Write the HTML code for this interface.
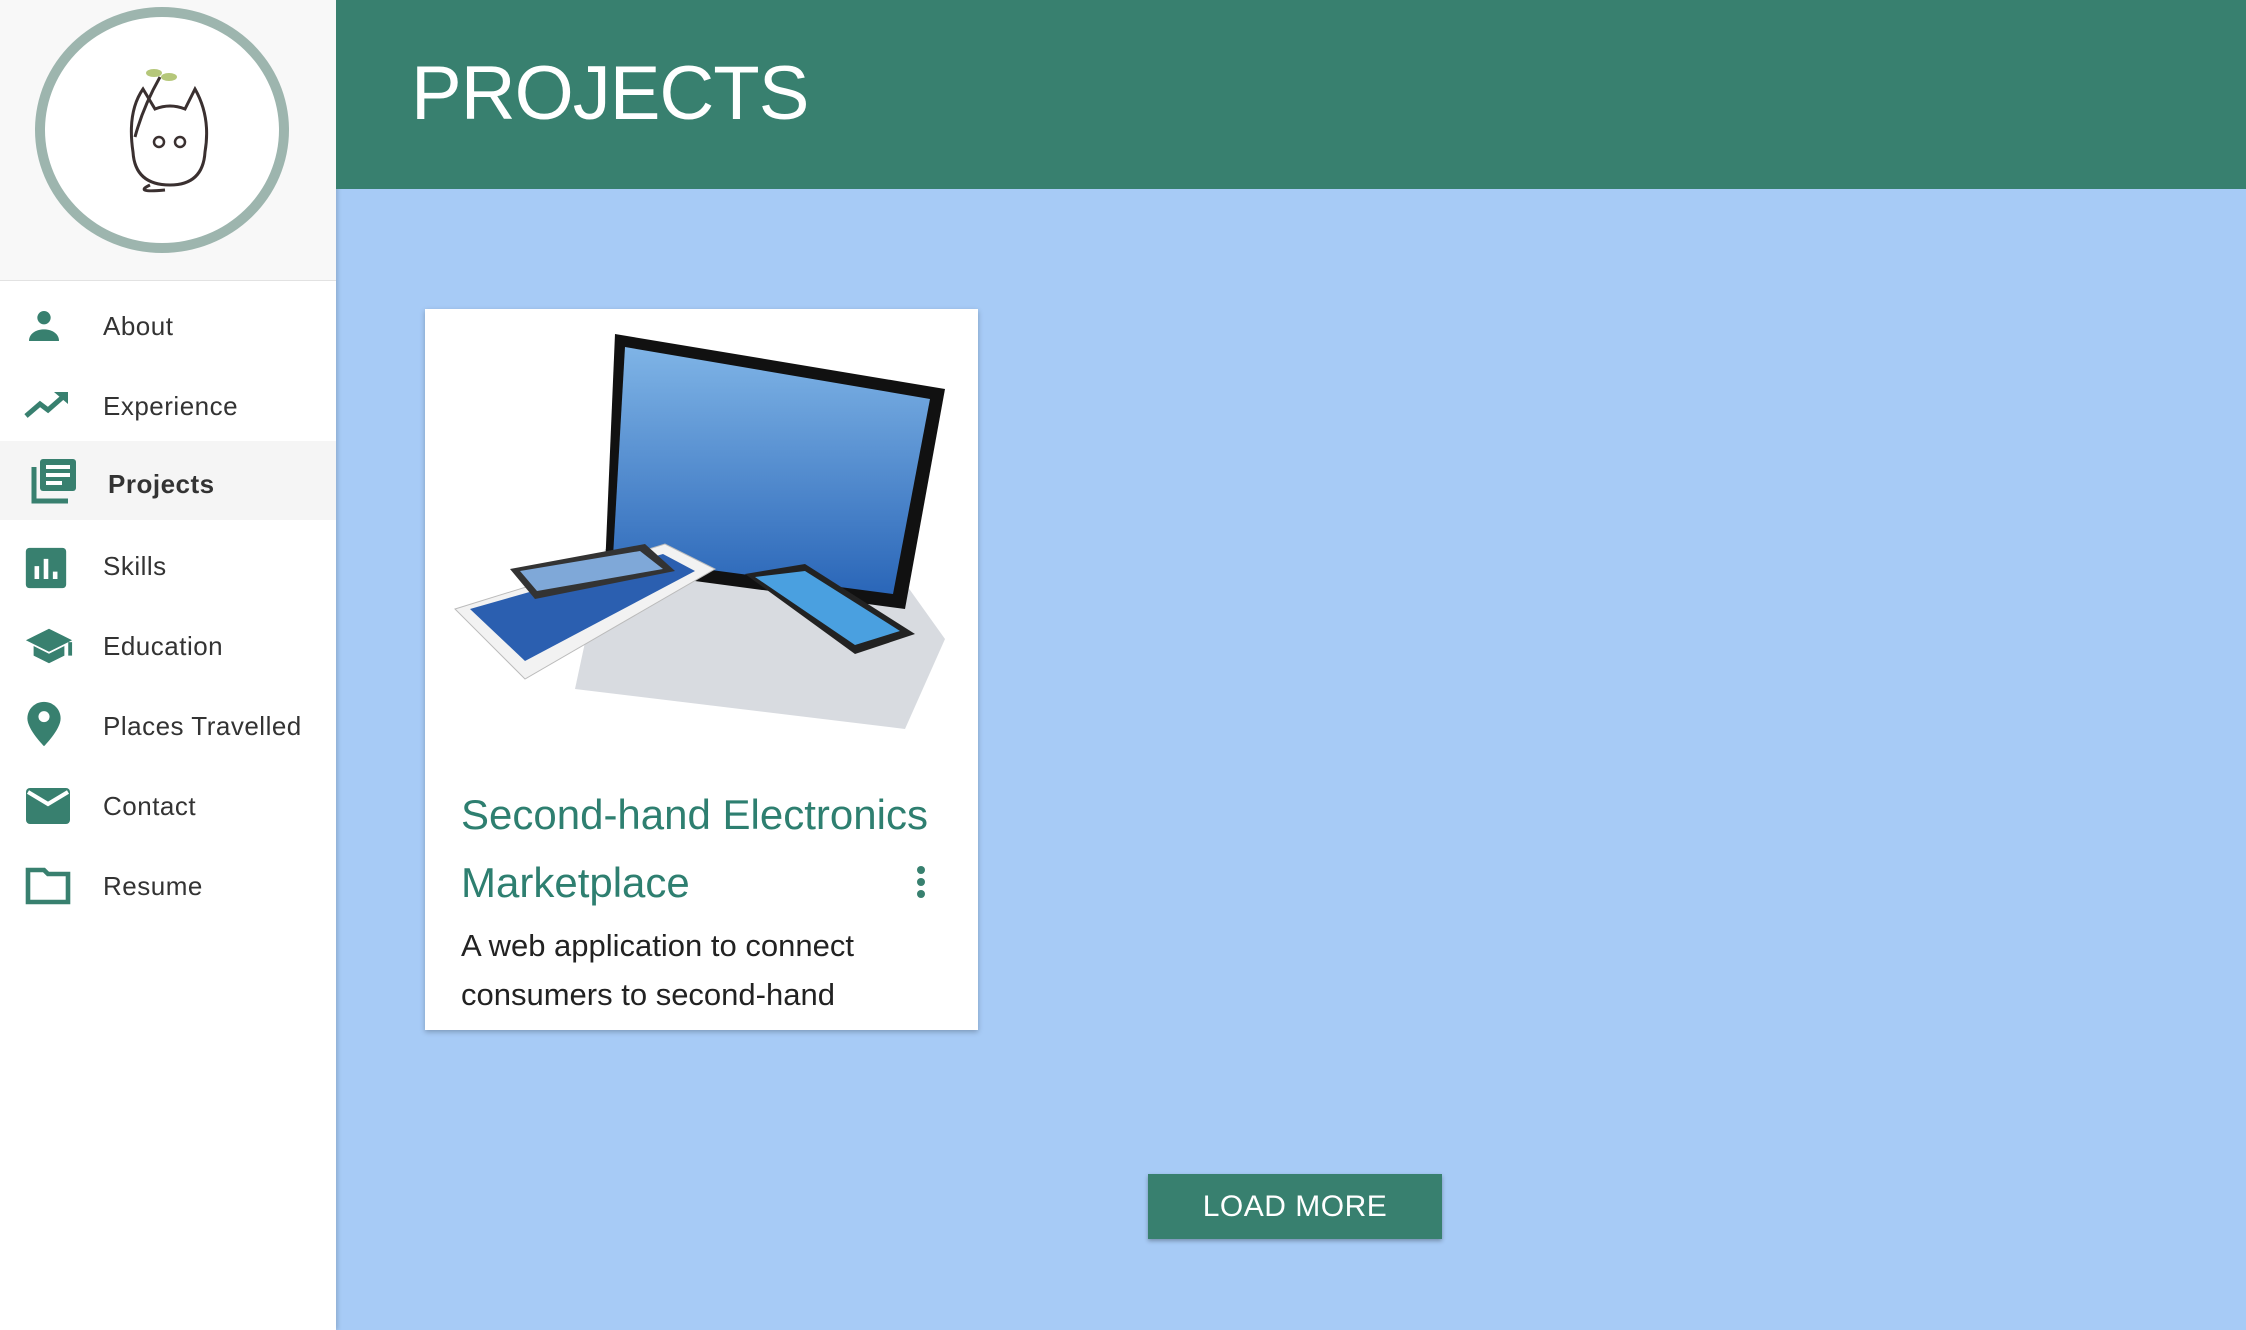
<!DOCTYPE html>
<html><head><meta charset="utf-8"><style>
*{margin:0;padding:0;box-sizing:border-box}
body{width:2246px;height:1330px;overflow:hidden;background:#a7cbf6;font-family:"Liberation Sans",sans-serif;position:relative}
.side{position:absolute;left:0;top:0;width:336px;height:1330px;background:#fff;box-shadow:2px 0 4px rgba(0,0,0,.15)}
.shead{height:281px;background:#f8f8f8;border-bottom:1px solid #e2e2e2;position:relative}
.circ{position:absolute;left:35px;top:7px;width:254px;height:246px;border-radius:50%;border:10px solid #9db5ae;background:#fff}
.nav{position:absolute;left:0;width:336px;height:80px;display:flex;align-items:center;font-size:26px;color:#333;letter-spacing:.5px}
.nav .t{position:absolute;left:103px}
.nav svg{position:absolute;left:24px;top:20px}
.hdr{position:absolute;left:336px;top:0;right:0;height:189px;background:#38806f}
.hdr h1{position:absolute;left:75px;top:50px;font-weight:normal;font-size:76px;color:#fff;letter-spacing:-1px}
.card{position:absolute;left:425px;top:309px;width:553px;height:721px;background:#fff;box-shadow:0 2px 5px rgba(0,0,0,.25);overflow:hidden}
.ttl{position:absolute;left:36px;top:472px;font-size:42px;line-height:68px;color:#2e7f70}
.desc{position:absolute;left:36px;top:612px;font-size:31px;line-height:49px;color:#222}
.btn{position:absolute;left:1148px;top:1174px;width:294px;height:65px;background:#38806f;color:#fff;font-size:30px;display:flex;align-items:center;justify-content:center;box-shadow:0 2px 4px rgba(0,0,0,.3);letter-spacing:.5px}
</style></head><body>
<div class="side">
 <div class="shead"><div class="circ">
  <svg width="254" height="246" viewBox="0 0 254 246" style="position:absolute;left:-10px;top:-10px">
   <path d="M98 145 Q92 105 108 82 L120 102 Q135 96 150 102 L160 82 Q176 110 170 145 Q168 178 135 178 Q100 178 98 145Z" fill="#fff" stroke="#3a3030" stroke-width="3"/>
   <path d="M100 130 Q108 100 125 70" stroke="#3a3030" stroke-width="3" fill="none"/>
   <ellipse cx="119" cy="66" rx="8" ry="4" fill="#b5c77a"/><ellipse cx="134" cy="70" rx="8" ry="4" fill="#b5c77a"/>
   <circle cx="124" cy="135" r="5" fill="none" stroke="#3a3030" stroke-width="2.5"/><circle cx="145" cy="135" r="5" fill="none" stroke="#3a3030" stroke-width="2.5"/>
   <path d="M115 178 Q98 186 130 183" stroke="#3a3030" stroke-width="3" fill="none"/>
  </svg></div></div>
 <div class="nav" style="top:286px"><svg width="40" height="40" viewBox="0 0 24 24"><circle cx="12" cy="7" r="4" fill="#38806f"/><path d="M3 21c0-5 5-7 9-7s9 2 9 7z" fill="#38806f"/></svg><span class="t">About</span></div>
 <div class="nav" style="top:366px"><svg width="48" height="40" viewBox="0 0 24 20"><path d="M1 15l7-6 4 3 8-7" stroke="#38806f" stroke-width="2.5" fill="none"/><path d="M15 3h7v6z" fill="#38806f"/></svg><span class="t">Experience</span></div>
 <div class="nav" style="top:441px;height:79px;background:#f5f5f5;font-weight:bold"><svg width="48" height="48" viewBox="0 0 24 24" style="left:30px;top:16px"><rect x="5" y="1" width="18" height="16" rx="1.5" fill="#38806f"/><path d="M8 5h12M8 9h12M8 13h8" stroke="#fff" stroke-width="2"/><path d="M2 5v17h17" stroke="#38806f" stroke-width="2.5" fill="none"/></svg><span class="t" style="left:108px;top:28px">Projects</span></div>
 <div class="nav" style="top:526px"><svg width="44" height="44" viewBox="0 0 24 24"><rect x="1" y="1" width="22" height="22" rx="2" fill="#38806f"/><path d="M7 11v7M12 7v11M17 14v4" stroke="#fff" stroke-width="2.5"/></svg><span class="t">Skills</span></div>
 <div class="nav" style="top:606px"><svg width="50" height="40" viewBox="0 0 26 20"><path d="M13 1L1 7l12 6 12-6z" fill="#38806f"/><path d="M5 10v5l8 4 8-4v-5l-8 4z" fill="#38806f"/><path d="M24 8v7" stroke="#38806f" stroke-width="2"/></svg><span class="t">Education</span></div>
 <div class="nav" style="top:686px"><svg width="40" height="48" viewBox="0 0 20 26" style="top:14px"><path d="M10 1C5 1 1 5 1 10c0 6 9 15 9 15s9-9 9-15c0-5-4-9-9-9z" fill="#38806f"/><circle cx="10" cy="9" r="3" fill="#fff"/></svg><span class="t">Places Travelled</span></div>
 <div class="nav" style="top:766px"><svg width="48" height="40" viewBox="0 0 24 20"><rect x="1" y="1" width="22" height="18" rx="2" fill="#38806f"/><path d="M2 3l10 6 10-6" stroke="#fff" stroke-width="2" fill="none"/></svg><span class="t">Contact</span></div>
 <div class="nav" style="top:846px"><svg width="48" height="40" viewBox="0 0 24 20"><path d="M2 2h8l2 2h10v14H2z" stroke="#38806f" stroke-width="2.3" fill="none"/></svg><span class="t">Resume</span></div>
</div>
<div class="hdr"><h1>PROJECTS</h1></div>
<div class="card">
 <svg width="553" height="440" viewBox="0 0 553 440" style="position:absolute;left:0;top:0">
  <defs><linearGradient id="s" x1="0" y1="0" x2="0" y2="1"><stop offset="0" stop-color="#7fb4e6"/><stop offset="1" stop-color="#2a66b8"/></linearGradient></defs>
  <path d="M180 240 L470 260 L520 330 L480 420 L150 380 Z" fill="#d8dbe0"/>
  <path d="M190 25 L520 80 L480 300 L180 260 Z" fill="#111"/>
  <path d="M200 38 L505 90 L468 285 L188 248 Z" fill="url(#s)"/>
  <path d="M30 300 L240 235 L290 260 L100 370 Z" fill="#f2f2f2" stroke="#bbb"/>
  <path d="M45 300 L238 245 L270 262 L100 352 Z" fill="#2b5fb0"/>
  <path d="M85 260 L220 235 L250 262 L110 290 Z" fill="#333"/>
  <path d="M95 262 L215 242 L238 260 L112 282 Z" fill="#7fa8d8"/>
  <path d="M320 265 L380 255 L490 325 L430 345 Z" fill="#222"/>
  <path d="M330 268 L380 262 L475 322 L430 336 Z" fill="#4aa0e0"/>
 </svg>
 <div class="ttl">Second-hand Electronics<br>Marketplace</div>
 <svg width="12" height="34" style="position:absolute;left:490px;top:556px"><circle cx="6" cy="5" r="4" fill="#38806f"/><circle cx="6" cy="17" r="4" fill="#38806f"/><circle cx="6" cy="29" r="4" fill="#38806f"/></svg>
 <div class="desc">A web application to connect<br>consumers to second-hand</div>
</div>
<div class="btn">LOAD MORE</div>
</body></html>
